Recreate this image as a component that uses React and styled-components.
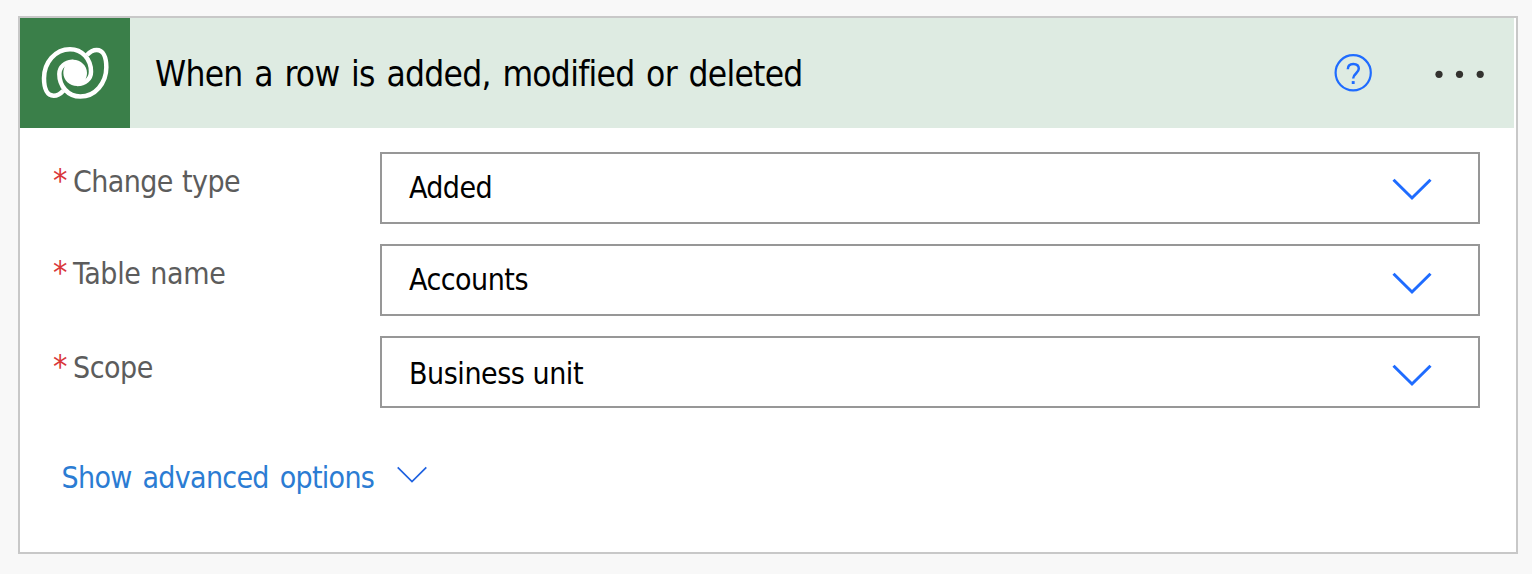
import React from "react";
import styled, { createGlobalStyle } from "styled-components";

const GlobalStyle = createGlobalStyle`
  *, *::before, *::after { box-sizing: border-box; }
  body {
    margin: 0;
    background: #f8f8f8;
    font-family: "DejaVu Sans Condensed", "DejaVu Sans", sans-serif;
    font-stretch: condensed;
  }
`;

const Page = styled.main`
  width: 1532px;
  height: 574px;
  padding: 16px 14px 20px 18px;
`;

const Card = styled.section`
  height: 538px;
  border: 2px solid #c8c8c8;
  background: #fff;
`;

const Header = styled.header`
  display: flex;
  align-items: center;
  height: 110px;
  margin-right: 2px;
  background: #deebe2;
`;

const Logo = styled.svg`
  width: 110px;
  height: 110px;
  flex: none;
  background: #3a7f49;
`;

const Title = styled.h1`
  flex: 1;
  margin: 0 0 0 25px;
  padding-top: 2px;
  font-size: 35px;
  font-weight: 400;
  line-height: 42px;
  letter-spacing: -0.73px;
  word-spacing: 2.4px;
  color: #000;
  white-space: nowrap;
`;

const IconButton = styled.button`
  display: flex;
  padding: 0;
  border: 0;
  background: none;
  margin-right: ${(p) => p.$gap}px;
`;

const Form = styled.div`
  display: flex;
  flex-direction: column;
  gap: 20px;
  padding: 24px 36px 0 33px;
`;

const Field = styled.div`
  display: flex;
  height: 72px;
`;

const Label = styled.label`
  display: flex;
  width: 327px;
  padding-top: ${(p) => 12 + p.$drop}px;
  font-size: 30px;
  line-height: 36px;
  letter-spacing: ${(p) => p.$track}px;
  word-spacing: 1.5px;
  color: #5c5c5c;
`;

const Required = styled.span`
  width: 20px;
  font-size: 32px;
  line-height: 32px;
  color: #d9363a;
`;

const Select = styled.div`
  display: flex;
  justify-content: space-between;
  flex: 1;
  padding: ${(p) => 16 + p.$drop}px 46px 0 27px;
  border: 2px solid #979797;
  font-size: 30px;
  line-height: 36px;
  letter-spacing: ${(p) => p.$track}px;
  color: #000;
`;

const Chevron = styled.svg`
  flex: none;
  width: 40px;
  height: 24px;
  margin-top: ${(p) => p.$top}px;
`;

const Advanced = styled.button`
  display: flex;
  margin: 52px 0 0 41px;
  padding: 0;
  border: 0;
  background: none;
  font: inherit;
  font-size: 30px;
  line-height: 36px;
  letter-spacing: -0.7px;
  word-spacing: 3px;
  color: #2b7cd3;
`;

const AdvancedText = styled.span`
  width: 336px;
  padding-left: 0.6px;
  text-align: left;
  white-space: nowrap;
`;

const AdvancedChevron = styled.svg`
  width: 30px;
  height: 18px;
  margin-top: 6px;
`;

const fields = [
  { label: "Change type", value: "Added", drop: 0, chevron: 8, track: -0.62, valueTrack: -0.6 },
  { label: "Table name", value: "Accounts", drop: 0, chevron: 10, track: -0.35, valueTrack: -0.5 },
  { label: "Scope", value: "Business unit", drop: 2, chevron: 10, track: -0.5, valueTrack: -0.45 },
];

const swirl =
  "M160 242C151 252 144 257 131 257C112 257 102 236 102 205C102 157 136 117.5 180 117.5C217 117.5 243 148 243 185C243 207 225 222 201 222";

function DataverseLogo() {
  return (
    <Logo viewBox="30 24 330 330" aria-hidden="true">
      <g fill="none" stroke="#fff" strokeWidth="13.5">
        <path d={swirl} />
        <path d={swirl} transform="rotate(180 195.5 188.5)" />
      </g>
      <path
        fill="#fff"
        d="M190 149C212 149 231 167 231 188C231 196 229 203 226 209L230 215C221 224 212 228 201 228C179 228 160 210 160 189C160 181 162 174 165 168L161 162C170 153 179 149 190 149Z"
      />
    </Logo>
  );
}

export default function App() {
  return (
    <>
      <GlobalStyle />
      <Page>
        <Card>
          <Header>
            <DataverseLogo />
            <Title>When a row is added, modified or deleted</Title>
            <IconButton $gap={62} aria-label="Help">
              <svg width="38" height="38" viewBox="0 0 38 38" fill="none" stroke="#1f6cff" strokeWidth="2.2">
                <circle cx="19.2" cy="18.8" r="17.6" />
                <path d="M13.8 15.2C13.8 11.8 16 9.9 19.3 9.9C22.6 9.9 24.8 11.8 24.8 14.8C24.8 19 19.2 19.6 19.2 24.6" strokeWidth="2.5" />
                <path d="M19.2 27.1V30" strokeWidth="2.9" />
              </svg>
            </IconButton>
            <IconButton $gap={28} aria-label="More">
              <svg width="52" height="10" viewBox="0 0 52 10" fill="#33322f">
                <circle cx="5" cy="6.3" r="3.6" />
                <circle cx="25.5" cy="6.3" r="3.6" />
                <circle cx="46.2" cy="6.3" r="3.6" />
              </svg>
            </IconButton>
          </Header>
          <Form>
            {fields.map((f) => (
              <Field key={f.label}>
                <Label $drop={f.drop} $track={f.track}>
                  <Required>*</Required>
                  {f.label}
                </Label>
                <Select $drop={f.drop} $track={f.valueTrack}>
                  {f.value}
                  <Chevron $top={f.chevron - f.drop} viewBox="0 0 40 24" fill="none" stroke="#1f6cff" strokeWidth="3">
                    <path d="M1.5 1.8L20 20L38.5 1.8" />
                  </Chevron>
                </Select>
              </Field>
            ))}
          </Form>
          <Advanced>
            <AdvancedText>Show advanced options</AdvancedText>
            <AdvancedChevron viewBox="0 0 30 18" fill="none" stroke="#1f62e0" strokeWidth="1.7">
              <path d="M0.7 1.3L15 15.6L29.3 1.3" />
            </AdvancedChevron>
          </Advanced>
        </Card>
      </Page>
    </>
  );
}
